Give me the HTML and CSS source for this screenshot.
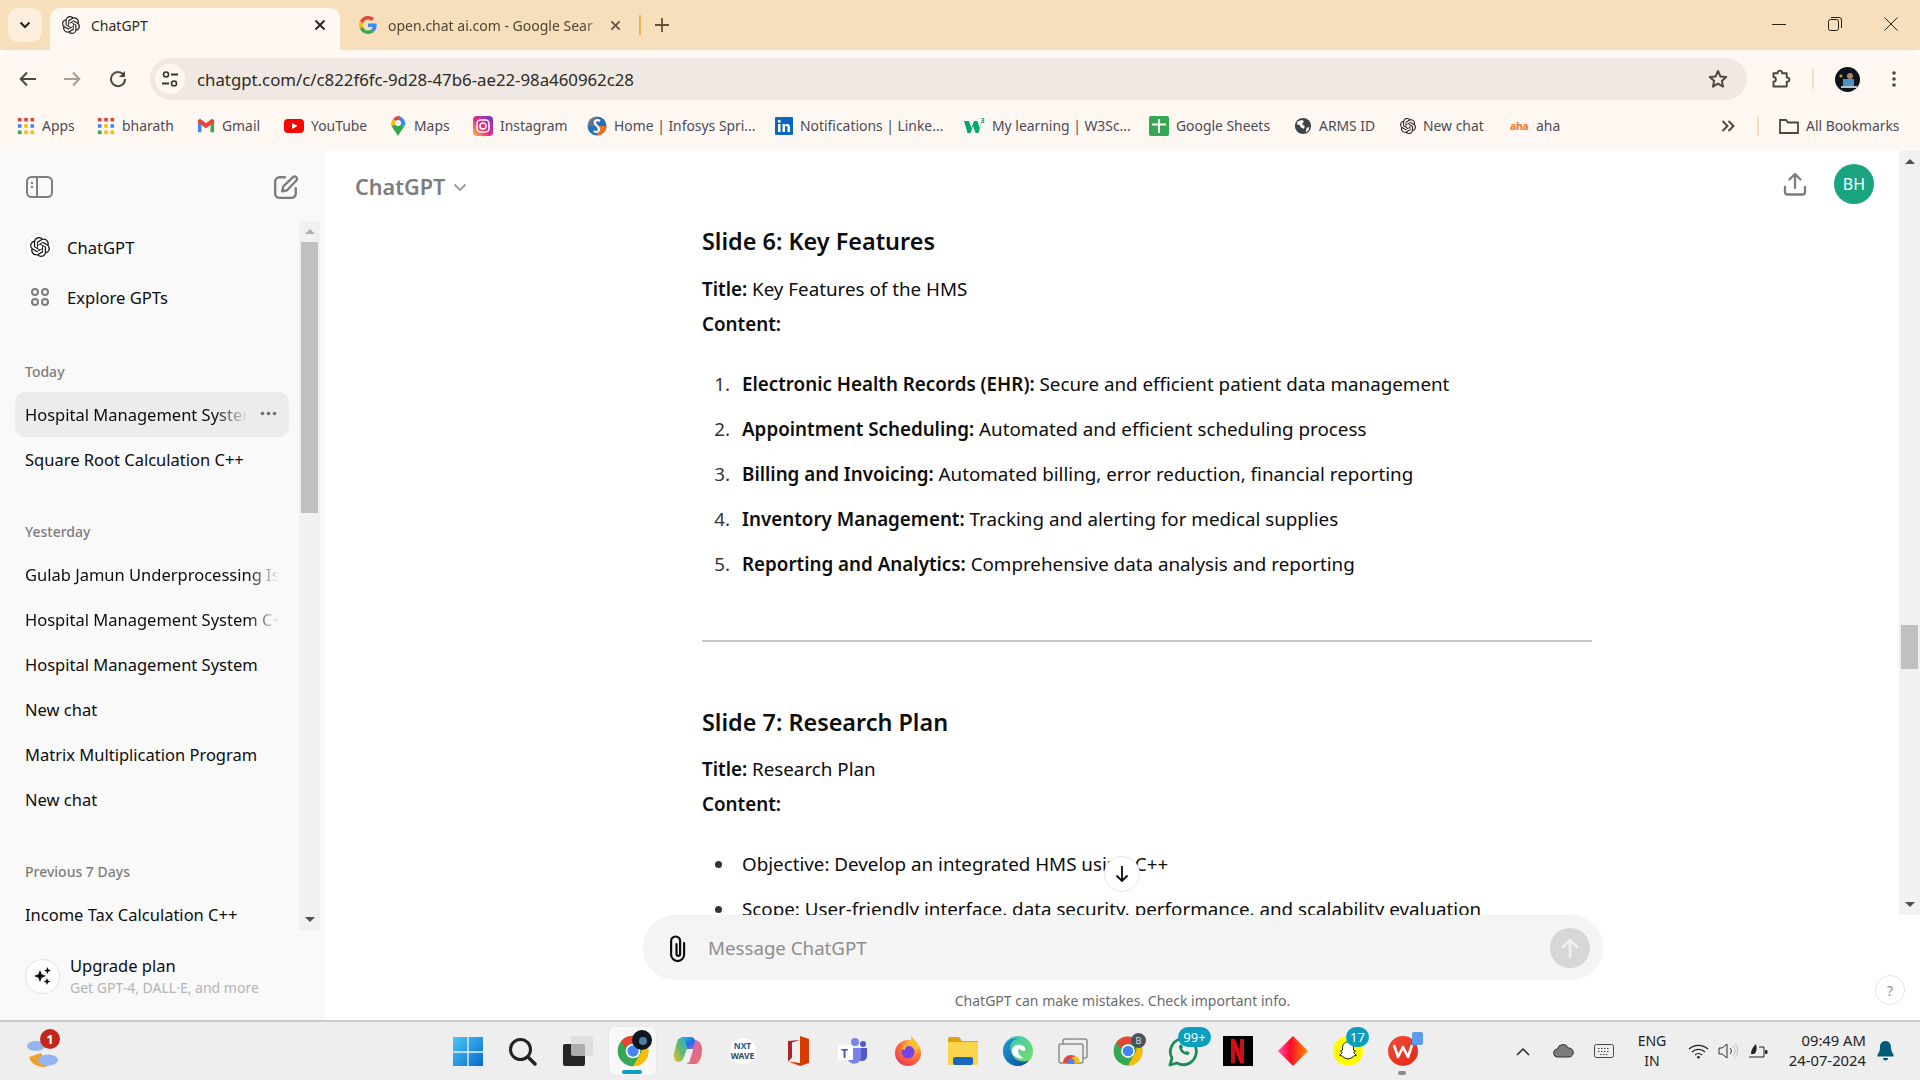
FILE: index.html
```html
<!DOCTYPE html>
<html lang="en">
<head>
<meta charset="utf-8">
<title>ChatGPT</title>
<link rel="stylesheet" href="styles.css">
</head>
<body>
<svg class="defs" width="0" height="0">
  <defs>
    <symbol id="oai" viewBox="0 0 24 24"><path fill="currentColor" d="M22.2819 9.8211a5.9847 5.9847 0 0 0-.5157-4.9108 6.0462 6.0462 0 0 0-6.5098-2.9A6.0651 6.0651 0 0 0 4.9807 4.1818a5.9847 5.9847 0 0 0-3.9977 2.9 6.0462 6.0462 0 0 0 .7427 7.0966 5.98 5.98 0 0 0 .511 4.9107 6.051 6.051 0 0 0 6.5146 2.9001A5.9847 5.9847 0 0 0 13.2599 24a6.0557 6.0557 0 0 0 5.7718-4.2058 5.9894 5.9894 0 0 0 3.9977-2.9001 6.0557 6.0557 0 0 0-.7475-7.0729zm-9.022 12.6081a4.4755 4.4755 0 0 1-2.8764-1.0408l.1419-.0804 4.7783-2.7582a.7948.7948 0 0 0 .3927-.6813v-6.7369l2.02 1.1686a.071.071 0 0 1 .038.052v5.5826a4.504 4.504 0 0 1-4.4945 4.4944zm-9.6607-4.1254a4.4708 4.4708 0 0 1-.5346-3.0137l.142.0852 4.783 2.7582a.7712.7712 0 0 0 .7806 0l5.8428-3.3685v2.3324a.0804.0804 0 0 1-.0332.0615L9.74 19.9502a4.4992 4.4992 0 0 1-6.1408-1.6464zM2.3408 7.8956a4.485 4.485 0 0 1 2.3655-1.9728V11.6a.7664.7664 0 0 0 .3879.6765l5.8144 3.3543-2.0201 1.1685a.0757.0757 0 0 1-.071 0l-4.8303-2.7865A4.504 4.504 0 0 1 2.3408 7.872zm16.5963 3.8558L13.1038 8.364 15.1192 7.2a.0757.0757 0 0 1 .071 0l4.8303 2.7913a4.4944 4.4944 0 0 1-.6765 8.1042v-5.6772a.79.79 0 0 0-.407-.667zm2.0107-3.0231l-.142-.0852-4.7735-2.7818a.7759.7759 0 0 0-.7854 0L9.409 9.2297V6.8974a.0662.0662 0 0 1 .0284-.0615l4.8303-2.7866a4.4992 4.4992 0 0 1 6.6802 4.66zM8.3065 12.863l-2.02-1.1638a.0804.0804 0 0 1-.038-.0567V6.0742a4.4992 4.4992 0 0 1 7.3757-3.4537l-.142.0805L8.704 5.459a.7948.7948 0 0 0-.3927.6813zm1.0976-2.3654l2.602-1.4998 2.6069 1.4998v2.9994l-2.5974 1.4997-2.6067-1.4997Z"/></symbol>
    <symbol id="grid9" viewBox="0 0 20 20"><g><rect x="1" y="1" width="4" height="4" fill="#ea4335"/><rect x="8" y="1" width="4" height="4" fill="#ea4335"/><rect x="15" y="1" width="4" height="4" fill="#ea4335"/><rect x="1" y="8" width="4" height="4" fill="#4285f4"/><rect x="8" y="8" width="4" height="4" fill="#fbbc05"/><rect x="15" y="8" width="4" height="4" fill="#4285f4"/><rect x="1" y="15" width="4" height="4" fill="#34a853"/><rect x="8" y="15" width="4" height="4" fill="#fbbc05"/><rect x="15" y="15" width="4" height="4" fill="#fbbc05"/></g></symbol>
    <symbol id="globe" viewBox="0 0 20 20"><circle cx="10" cy="10" r="9" fill="#3f4347"/><path fill="#fff8f2" d="M4 5l5-2 2 2-2 3 3 2-1 3-3-1-2-3-3-1zM14 12l3-1-1 4-3 2z"/></symbol>
    <symbol id="chrome" viewBox="0 0 48 48"><circle cx="24" cy="24" r="23" fill="#34a853"/><path fill="#ea4335" d="M24 1a23 23 0 0 1 20 11.5H24a11.5 11.5 0 0 0-10.6 7L5.5 10A23 23 0 0 1 24 1z"/><path fill="#fbbc05" d="M44 12.500a23 23 0 0 1-20 34.500l10-17.500a11.500 11.500 0 0 0 0-17z"/><circle cx="24" cy="24" r="11" fill="#fff"/><circle cx="24" cy="24" r="8.500" fill="#4285f4"/></symbol>
  </defs>
</svg>

<div class="browser">
  <header class="tabstrip">
    <div class="tabsearch"><svg width="12" height="8" viewBox="0 0 12 8"><path d="M1.500 1.500 6 6l4.500-4.500" fill="none" stroke="#222" stroke-width="2"/></svg></div>
    <div class="tab tab-active">
      <svg class="tab-fav" width="18" height="18"><use href="#oai"/></svg>
      <span class="tab-title">ChatGPT</span>
      <svg class="tab-x" width="12" height="12" viewBox="0 0 12 12"><path d="M1.500 1.500l9 9m0-9l-9 9" stroke="#222" stroke-width="1.800"/></svg>
    </div>
    <div class="tab tab-idle">
      <svg class="tab-fav" width="18" height="18" viewBox="0 0 48 48"><path fill="#ea4335" d="M24 9.500c3.500 0 6.700 1.200 9.200 3.600l6.900-6.900C35.900 2.400 30.500 0 24 0 14.600 0 6.500 5.400 2.600 13.200l8 6.200C12.400 13.700 17.700 9.500 24 9.500z"/><path fill="#4285f4" d="M47 24.500c0-1.600-.1-3.100-.4-4.500H24v9h12.900c-.6 3-2.200 5.500-4.700 7.200l7.700 6C44.400 37.900 47 31.800 47 24.500z"/><path fill="#fbbc05" d="M10.600 28.600A14.500 14.500 0 0 1 10.600 19.400l-8-6.200a24 24 0 0 0 0 21.600z"/><path fill="#34a853" d="M24 48c6.500 0 11.900-2.100 15.900-5.800l-7.700-6c-2.100 1.400-4.900 2.300-8.200 2.300-6.300 0-11.600-4.200-13.400-9.900l-8 6.200C6.500 42.600 14.600 48 24 48z"/></svg>
      <span class="tab-title tab-title-fade">open.chat ai.com - Google Sear</span>
      <svg class="tab-x" width="11" height="11" viewBox="0 0 12 12"><path d="M1.500 1.500l9 9m0-9l-9 9" stroke="#5d5040" stroke-width="1.800"/></svg>
    </div>
    <span class="tab-sep"></span>
    <svg class="tab-plus" width="14" height="14" viewBox="0 0 14 14"><path d="M7 0v14M0 7h14" stroke="#5d5040" stroke-width="1.800"/></svg>
    <div class="winctl">
      <svg width="14" height="14" viewBox="0 0 14 14"><path d="M0 7.500h14" stroke="#222"/></svg>
      <svg width="14" height="14" viewBox="0 0 14 14"><rect x=".5" y="2.500" width="10" height="11" rx="2" fill="none" stroke="#222"/><path d="M3 .5h8a2.500 2.500 0 0 1 2.500 2.500v8" fill="none" stroke="#222"/></svg>
      <svg width="14" height="14" viewBox="0 0 14 14"><path d="M.5.500l13 13m0-13l-13 13" stroke="#222"/></svg>
    </div>
  </header>

  <nav class="toolbar">
    <svg class="nav-ic" width="18" height="16" viewBox="0 0 18 16"><path d="M17 8H2m6-6.500L1.700 8 8 14.500" fill="none" stroke="#50463a" stroke-width="2"/></svg>
    <svg class="nav-ic" width="18" height="16" viewBox="0 0 18 16"><path d="M1 8h15m-6-6.500L16.300 8 10 14.500" fill="none" stroke="#a69c90" stroke-width="2"/></svg>
    <svg class="nav-ic" width="18" height="18" viewBox="0 0 18 18"><path d="M15 5.500A7 7 0 1 0 16 9" fill="none" stroke="#50463a" stroke-width="2"/><path d="M16 1v6h-6z" fill="#50463a"/></svg>
    <div class="omnibox">
      <span class="site-chip"><svg width="18" height="18" viewBox="0 0 18 18"><circle cx="5" cy="4.500" r="2.500" fill="none" stroke="#3a322a" stroke-width="1.600"/><path d="M10 4.500h7M1 13.500h7" stroke="#3a322a" stroke-width="1.800"/><circle cx="13" cy="13.500" r="2.500" fill="none" stroke="#3a322a" stroke-width="1.600"/></svg></span>
      <span class="url">chatgpt.com/c/c822f6fc-9d28-47b6-ae22-98a460962c28</span>
      <svg class="star" width="20" height="20" viewBox="0 0 20 20"><path d="M10 2l2.400 5.400 5.800.6-4.400 3.900 1.300 5.700L10 14.700l-5.100 2.900 1.300-5.700L1.800 8l5.800-.6z" fill="none" stroke="#50463a" stroke-width="2" stroke-linejoin="round"/></svg>
    </div>
    <svg class="ext" width="20" height="20" viewBox="0 0 20 20"><path d="M1 5h4.500a2.300 2.300 0 1 1 4.500 0H15v4.500a2.300 2.300 0 1 1 0 4.500v5H1v-5a2.500 2.500 0 0 0 0-5z" transform="translate(1.500 -.5) scale(.95)" fill="none" stroke="#50463a" stroke-width="2" stroke-linejoin="round"/></svg>
    <span class="tool-sep"></span>
    <svg class="avatar" width="25" height="25" viewBox="0 0 25 25"><defs><clipPath id="avc"><circle cx="12.500" cy="12.500" r="12.500"/></clipPath></defs><g clip-path="url(#avc)"><rect width="25" height="25" fill="#0f141c"/><rect x="8" y="12" width="11" height="8" fill="#4b93c4"/><circle cx="15" cy="9" r="3" fill="#a9856e"/><circle cx="6" cy="9" r="1.500" fill="#c79b3a"/><rect x="6" y="19" width="16" height="2" fill="#b9c2c8"/></g></svg>
    <svg class="kebab" width="4" height="16" viewBox="0 0 4 16"><circle cx="2" cy="2" r="1.800" fill="#50463a"/><circle cx="2" cy="8" r="1.800" fill="#50463a"/><circle cx="2" cy="14" r="1.800" fill="#50463a"/></svg>
  </nav>

  <nav class="bookmarks">
    <div class="bm"><svg width="18" height="18"><use href="#grid9"/></svg><span>Apps</span></div>
    <div class="bm"><svg width="18" height="18"><use href="#grid9"/></svg><span>bharath</span></div>
    <div class="bm"><svg width="18" height="18" viewBox="0 0 20 20"><path fill="#4285f4" d="M1 5v12h4V9z"/><path fill="#34a853" d="M15 9v8h4V5z"/><path fill="#ea4335" d="M1 3.500V6l9 6.500L19 6V3.500L16.500 2 10 7 3.500 2z"/></svg><span>Gmail</span></div>
    <div class="bm"><svg width="20" height="20" viewBox="0 0 20 20"><rect y="3" width="20" height="14" rx="4" fill="#f00"/><path d="M8 7l5.500 3L8 13z" fill="#fff"/></svg><span>YouTube</span></div>
    <div class="bm"><svg width="18" height="22" viewBox="0 0 18 22"><path fill="#34a853" d="M9 21C7 17 4 14 2.500 11l7-4 6 4C14 14 11 17 9 21z"/><path fill="#fbbc05" d="M2.500 11A7 7 0 0 1 4 4l5 5z"/><path fill="#4285f4" d="M9 1a8 8 0 0 1 7 10l-7-3z"/><path fill="#ea4335" d="M4 4a7.500 7.500 0 0 1 7-3L8 7z"/><circle cx="9" cy="8" r="3" fill="#fff"/></svg><span>Maps</span></div>
    <div class="bm"><svg width="20" height="20" viewBox="0 0 20 20"><defs><linearGradient id="ig" x1="0" y1="1" x2="1" y2="0"><stop offset="0" stop-color="#fdc03a"/><stop offset=".45" stop-color="#ee2a7b"/><stop offset="1" stop-color="#5b3fd6"/></linearGradient></defs><rect width="20" height="20" rx="4" fill="url(#ig)"/><rect x="4" y="4" width="12" height="12" rx="3.500" fill="none" stroke="#fff" stroke-width="1.500"/><circle cx="10" cy="10" r="3" fill="none" stroke="#fff" stroke-width="1.500"/></svg><span>Instagram</span></div>
    <div class="bm"><svg width="20" height="20" viewBox="0 0 20 20"><circle cx="10" cy="10" r="9.500" fill="#2572b8"/><path fill="#e8722a" d="M10 10h9.500a9.500 9.500 0 0 1-9.500 9.500z"/><path fill="#e8722a" d="M.5 10H10V.5A9.500 9.500 0 0 0 .5 10z" opacity=".35"/><path d="M13 5c-3-2-6 0-5 2.500S13 11 12 14s-4 2-5 1" fill="none" stroke="#fff" stroke-width="2.200"/></svg><span>Home | Infosys Spri...</span></div>
    <div class="bm"><svg width="18" height="18" viewBox="0 0 18 18"><rect width="18" height="18" rx="1" fill="#0a66c2"/><rect x="3" y="7" width="2.500" height="8" fill="#fff"/><circle cx="4.200" cy="4.300" r="1.500" fill="#fff"/><path d="M7.500 7H10v1.200c1-1.800 5-2 5 1.800v5h-2.500v-4.500c0-2-2.500-1.800-2.500 0V15H7.500z" fill="#fff"/></svg><span>Notifications | Linke...</span></div>
    <div class="bm"><svg width="21" height="18" viewBox="0 0 21 18"><path fill="#04aa6d" d="M0 4h5l2.500 7L10 4h3.500l2 7L18 4l-3.500 12h-3L9 9l-2.500 7h-3z"/><text x="16.500" y="6" class="w3-sup">3</text></svg><span>My learning | W3Sc...</span></div>
    <div class="bm"><svg width="20" height="20" viewBox="0 0 20 20"><rect width="20" height="20" rx="2" fill="#34a853"/><path d="M10 3v14M3 8.500h14" stroke="#fff" stroke-width="2"/></svg><span>Google Sheets</span></div>
    <div class="bm"><svg width="18" height="18"><use href="#globe"/></svg><span>ARMS ID</span></div>
    <div class="bm"><svg width="16" height="16"><use href="#oai"/></svg><span>New chat</span></div>
    <div class="bm"><span class="aha">aha</span><span>aha</span></div>
    <svg class="bm-more" width="14" height="12" viewBox="0 0 14 12"><path d="M1.500 1l5 5-5 5M7.500 1l5 5-5 5" fill="none" stroke="#50463a" stroke-width="2"/></svg>
    <span class="bm-sep"></span>
    <div class="bm"><svg width="20" height="16" viewBox="0 0 20 16"><path d="M1 14V2h6l2 2.500h10V15H1z" fill="none" stroke="#50463a" stroke-width="1.800"/></svg><span>All Bookmarks</span></div>
  </nav>

  <div class="page">
    <aside class="sidebar">
      <div class="side-top">
        <svg width="28" height="24" viewBox="0 0 28 24"><rect x="1" y="2" width="25" height="20" rx="4.500" fill="none" stroke="#7d7d7d" stroke-width="2"/><path d="M11 2v20" stroke="#7d7d7d" stroke-width="2"/><circle cx="6" cy="8" r="1.200" fill="#7d7d7d"/><circle cx="6" cy="12" r="1.200" fill="#7d7d7d"/></svg>
        <svg width="26" height="26" viewBox="0 0 24 24"><path d="M11 3H6a4 4 0 0 0-4 4v11a4 4 0 0 0 4 4h11a4 4 0 0 0 4-4v-5" fill="none" stroke="#7d7d7d" stroke-width="2.200" stroke-linecap="round"/><path d="M19 2.500a2.300 2.300 0 0 1 3 3L13 15l-4.500 1 1-4.500z" fill="none" stroke="#7d7d7d" stroke-width="2.200" stroke-linejoin="round"/></svg>
      </div>
      <div class="side-scroll">
        <div class="side-list">
          <div class="side-link"><span class="gpt-badge"><svg width="20" height="20"><use href="#oai"/></svg></span><span>ChatGPT</span></div>
          <div class="side-link"><span class="gpt-plain"><svg width="20" height="20" viewBox="0 0 20 20"><g fill="none" stroke="#7d7d7d" stroke-width="2"><circle cx="5" cy="5" r="3"/><circle cx="15" cy="5" r="3"/><circle cx="5" cy="15" r="3"/><circle cx="15" cy="15" r="3"/></g></svg></span><span>Explore GPTs</span></div>
          <h4 class="group-label group-today">Today</h4>
          <div class="chat chat-active"><span class="chat-text chat-fade">Hospital Management System</span><svg class="dots" width="17" height="5" viewBox="0 0 17 5"><circle cx="2.500" cy="2.500" r="1.800" fill="#6f6f6f"/><circle cx="8.500" cy="2.500" r="1.800" fill="#6f6f6f"/><circle cx="14.500" cy="2.500" r="1.800" fill="#6f6f6f"/></svg></div>
          <div class="chat"><span class="chat-text">Square Root Calculation C++</span></div>
          <h4 class="group-label group-next">Yesterday</h4>
          <div class="chat"><span class="chat-text chat-fade-full">Gulab Jamun Underprocessing Issue</span></div>
          <div class="chat"><span class="chat-text chat-fade-full">Hospital Management System C++</span></div>
          <div class="chat"><span class="chat-text">Hospital Management System</span></div>
          <div class="chat"><span class="chat-text">New chat</span></div>
          <div class="chat"><span class="chat-text">Matrix Multiplication Program</span></div>
          <div class="chat"><span class="chat-text">New chat</span></div>
          <h4 class="group-label group-prev">Previous 7 Days</h4>
          <div class="chat"><span class="chat-text">Income Tax Calculation C++</span></div>
        </div>
        <div class="scrollbar side-bar">
          <i class="arrow-up"></i>
          <div class="side-track"><b class="thumb side-thumb"></b></div>
          <i class="arrow-down"></i>
        </div>
      </div>
      <div class="upgrade">
        <span class="upgrade-ic"><svg width="20" height="20" viewBox="0 0 20 20"><path fill="#0d0d0d" d="M7 4l1.700 4.300L13 10l-4.300 1.700L7 16l-1.700-4.300L1 10l4.300-1.700zM14.500 1l1 2.500 2.500 1-2.500 1-1 2.500-1-2.500-2.500-1 2.500-1zM14 12l1 2.500 2.500 1-2.500 1-1 2.500-1-2.500-2.500-1 2.500-1z"/></svg></span>
        <div class="upgrade-txt"><div class="upgrade-t">Upgrade plan</div><div class="upgrade-s">Get GPT-4, DALL·E, and more</div></div>
      </div>
    </aside>

    <main class="main">
      <div class="upper">
        <div class="chatcol">
          <div class="chat-head">
            <div class="model">ChatGPT <svg width="14" height="9" viewBox="0 0 14 9"><path d="M1.500 1.500 7 7l5.500-5.500" fill="none" stroke="#9b9b9b" stroke-width="1.800"/></svg></div>
            <div class="head-right">
              <svg width="24" height="24" viewBox="0 0 24 24"><path d="M12 16V2.500M6.500 7.500 12 2l5.500 5.500M2 15v5a2.500 2.500 0 0 0 2.500 2.500h15A2.500 2.500 0 0 0 22 20v-5" fill="none" stroke="#7d7d7d" stroke-width="2.300" stroke-linecap="round" stroke-linejoin="round"/></svg>
              <span class="user-badge">BH</span>
            </div>
          </div>
          <article class="thread">
            <h3>Slide 6: Key Features</h3>
            <p><strong>Title:</strong> Key Features of the HMS<br><strong>Content:</strong></p>
            <ol>
              <li><strong>Electronic Health Records (EHR):</strong> Secure and efficient patient data management</li>
              <li><strong>Appointment Scheduling:</strong> Automated and efficient scheduling process</li>
              <li><strong>Billing and Invoicing:</strong> Automated billing, error reduction, financial reporting</li>
              <li><strong>Inventory Management:</strong> Tracking and alerting for medical supplies</li>
              <li><strong>Reporting and Analytics:</strong> Comprehensive data analysis and reporting</li>
            </ol>
            <hr>
            <h3>Slide 7: Research Plan</h3>
            <p><strong>Title:</strong> Research Plan<br><strong>Content:</strong></p>
            <ul>
              <li>Objective: Develop an integrated HMS using C++</li>
              <li>Scope: User-friendly interface, data security, performance, and scalability evaluation</li>
            </ul>
          </article>
          <span class="to-bottom"><svg width="14" height="18" viewBox="0 0 14 18"><path d="M7 1v15M1.500 10.500 7 16l5.500-5.500" fill="none" stroke="#0d0d0d" stroke-width="1.800"/></svg></span>
        </div>
        <div class="scrollbar main-bar">
          <i class="arrow-up"></i>
          <div class="main-track"><b class="thumb main-thumb"></b></div>
          <i class="arrow-down"></i>
        </div>
      </div>
      <div class="composer-wrap">
        <div class="composer">
          <svg width="20" height="28" viewBox="0 0 20 28"><path d="M8.500 10v10a1.800 1.800 0 0 0 3.600 0V7a4.500 4.500 0 0 0-9 0v13.500a6.500 6.500 0 0 0 13 0V9" fill="none" stroke="#0d0d0d" stroke-width="2.200" stroke-linecap="round"/></svg>
          <span class="placeholder">Message ChatGPT</span>
          <span class="send"><svg width="20" height="22" viewBox="0 0 20 22"><path d="M10 20V3M3 10l7-7 7 7" fill="none" stroke="#f1f1f1" stroke-width="2.500" stroke-linecap="round"/></svg></span>
        </div>
        <div class="disclaimer">ChatGPT can make mistakes. Check important info.</div>
        <span class="help">?</span>
      </div>
    </main>
  </div>

  <footer class="taskbar">
    <div class="weather">
      <svg width="34" height="36" viewBox="0 0 34 36"><path d="M3 24a14 14 0 0 0 24 5A14 14 0 0 1 15 20z" fill="#f0a02c"/><ellipse cx="10" cy="13" rx="9" ry="5" fill="#93b4ee"/><ellipse cx="22" cy="27" rx="10" ry="5.500" fill="#93b4ee"/></svg>
      <span class="badge-red">1</span>
    </div>
    <div class="apps">
      <div class="app"><svg width="30" height="30" viewBox="0 0 30 30"><defs><linearGradient id="win" x1="0" y1="0" x2="1" y2="1"><stop offset="0" stop-color="#4cc8fa"/><stop offset="1" stop-color="#0568c8"/></linearGradient></defs><path fill="url(#win)" d="M0 1h14.300v14.300H0zM15.700 1H30v14.300H15.700zM0 16.700h14.300V31H0zM15.700 16.700H30V31H15.700z"/></svg></div>
      <div class="app"><svg width="29" height="29" viewBox="0 0 29 29"><circle cx="12.500" cy="12.500" r="10" fill="none" stroke="#222" stroke-width="3"/><path d="M20 20l7 7" stroke="#222" stroke-width="3.500" stroke-linecap="round"/></svg></div>
      <div class="app"><svg width="30" height="30" viewBox="0 0 30 30"><rect x="0" y="8" width="22" height="22" rx="2" fill="#262626"/><rect x="8" y="0" width="22" height="20" rx="2" fill="#d9d9d9" opacity=".75"/></svg></div>
      <div class="app app-active"><svg width="32" height="32"><use href="#chrome"/></svg><svg class="corner-av" width="20" height="20" viewBox="0 0 20 20"><circle cx="10" cy="10" r="10" fill="#10161f"/><circle cx="11" cy="11" r="4" fill="#4b7ea2"/></svg><i class="app-line"></i></div>
      <div class="app"><svg width="30" height="30" viewBox="0 0 30 30"><defs><linearGradient id="cp1" x1="0" y1="0" x2="1" y2="1"><stop offset="0" stop-color="#2cc0e8"/><stop offset=".5" stop-color="#1f6fe0"/><stop offset="1" stop-color="#b66be8"/></linearGradient><linearGradient id="cp2" x1="0" y1="1" x2="1" y2="0"><stop offset="0" stop-color="#f1c232"/><stop offset=".5" stop-color="#62b86a"/><stop offset="1" stop-color="#29b0e0"/></linearGradient><linearGradient id="cp3" x1="0" y1="0" x2="1" y2="1"><stop offset="0" stop-color="#d06ce4"/><stop offset="1" stop-color="#ef6b4d"/></linearGradient></defs><path fill="url(#cp1)" d="M8 1h10c2 0 3 1 4 3l3 9H14l-2-7c-.5-2-2-3-4-3z"/><path fill="url(#cp2)" d="M8 2c3 0 3.500 2 4 4l2 7-4 10c-1 2-2 3-5 3-3 0-5-4-4-9l3-11c.5-2 2-4 4-4z"/><path fill="url(#cp3)" d="M22 4c2 0 7 2 7 9s-2 13-6 15H12c3 0 4.500-2 5-4l3-10c1-3 2-8 2-10z"/></svg></div>
      <div class="app"><span class="nxt"><span class="nxt-a">NXT</span><span class="nxt-b">WAVE</span></span></div>
      <div class="app"><svg width="22" height="30" viewBox="0 0 22 30"><path fill="#d83b01" d="M13 0l9 3v24l-9 3-12-4.500 12 1.500V4z"/><path fill="#a4262c" d="M13 4L5 6.500v15l-4 4V5z"/></svg></div>
      <div class="app"><svg width="30" height="28" viewBox="0 0 30 28"><circle cx="17" cy="5" r="4" fill="#7b83eb"/><circle cx="25" cy="7" r="3" fill="#5059c9"/><path fill="#5059c9" d="M20 11h9v8a5 5 0 0 1-9 3z"/><path fill="#7b83eb" d="M10 11h13v10a7 7 0 0 1-13 2z"/><rect x="0" y="8" width="15" height="15" rx="1" fill="#fff"/><text x="3" y="20.500" class="teams-t">T</text></svg></div>
      <div class="app"><svg width="30" height="30" viewBox="0 0 30 30"><defs><radialGradient id="ff" cx=".7" cy=".2" r="1"><stop offset="0" stop-color="#ffd13a"/><stop offset=".5" stop-color="#ff7139"/><stop offset="1" stop-color="#e5245e"/></radialGradient></defs><circle cx="15" cy="17" r="13" fill="url(#ff)"/><path d="M18 0c4 4 8 8 8 13l-8-3z" fill="#ffc02e"/><circle cx="15" cy="16" r="6.500" fill="#7542e5"/><path d="M8 13c2-4 7-5 10-3-4-.5-6 1-6 4z" fill="#ffb13a"/></svg></div>
      <div class="app"><svg width="30" height="28" viewBox="0 0 30 28"><path fill="#e0a108" d="M0 2a2 2 0 0 1 2-2h9l3 4h16v6H0z"/><rect y="5" width="30" height="23" rx="1" fill="#fcd54f"/><rect x="5" y="20" width="20" height="8" rx="2" fill="#1668c0"/></svg></div>
      <div class="app"><svg width="30" height="30" viewBox="0 0 30 30"><defs><linearGradient id="edge" x1="0" y1="0" x2="1" y2="1"><stop offset="0" stop-color="#36c5c0"/><stop offset="1" stop-color="#7ddf5f"/></linearGradient><linearGradient id="edge2" x1="0" y1="0" x2="1" y2="1"><stop offset="0" stop-color="#1d9bd8"/><stop offset="1" stop-color="#0c4f95"/></linearGradient></defs><circle cx="15" cy="15" r="15" fill="url(#edge)"/><path fill="url(#edge2)" d="M0 15C0 6 8 1 15 3c-7 1-9 6-7 13 2 8 11 12 18 8-3 4-7 6-11 6C6 30 0 23 0 15z"/><path fill="#fff" d="M9 15c0-5 5-7 9-6s5 4 4 6c-3 0-6-1-6-3-1 1-2 6 3 9s-10 2-10-6z"/></svg></div>
      <div class="app"><svg width="30" height="26" viewBox="0 0 30 26"><rect x="5" y="1" width="24" height="19" rx="2" fill="#eee" stroke="#8d8d8d" stroke-width="1.500"/><rect x="1" y="6" width="24" height="19" rx="2" fill="#eee" stroke="#8d8d8d" stroke-width="1.500"/><path d="M5 25a8 8 0 0 1 16 0z" fill="#ea4335"/><path d="M13 25v-4a4 4 0 0 1 8 4z" fill="#fbbc05"/><circle cx="13" cy="24" r="3.500" fill="#4285f4"/></svg></div>
      <div class="app"><svg width="30" height="30"><use href="#chrome"/></svg><span class="corner-b">B</span></div>
      <div class="app"><svg width="32" height="32" viewBox="0 0 32 32"><path d="M3 30l2-7a13 13 0 1 1 5 5z" fill="none" stroke="#1b8b5a" stroke-width="2.800" stroke-linejoin="round"/><path d="M12 11c0 5 4 9 9 9l2-2-3-2-2 1-3-3 1-2-2-3z" fill="#1b8b5a"/></svg><span class="count count-wide">99+</span></div>
      <div class="app"><span class="netflix"><svg width="13" height="24" viewBox="0 0 13 24"><path fill="#c11119" d="M0 0h4v24l-4 .5zM9 0h4v24l-4-.5z"/><path fill="#e50914" d="M0 0h4l9 24H9z"/></svg></span></div>
      <div class="app"><svg width="30" height="30" viewBox="0 0 30 30"><defs><linearGradient id="dia" x1="0" y1="0" x2="1" y2="0"><stop offset="0" stop-color="#ff4fb8"/><stop offset=".4" stop-color="#ff0a2a"/><stop offset="1" stop-color="#ff9000"/></linearGradient></defs><path fill="url(#dia)" d="M15 0l15 15-15 15L0 15z"/></svg></div>
      <div class="app"><svg width="30" height="30" viewBox="0 0 30 30"><circle cx="15" cy="15" r="15" fill="#fffc00"/><path d="M15 6c4 0 5.500 3 5.500 6v2l2 1-2 1.500 3 3-3 .5-1 1.500-4.500 1.500-4.500-1.500-1-1.500-3-.5 3-3L7.500 15l2-1v-2c0-3 1.500-6 5.500-6z" fill="#fff" stroke="#222" stroke-width="1"/></svg><span class="count">17</span></div>
      <div class="app"><svg width="30" height="30" viewBox="0 0 30 30"><defs><linearGradient id="wps" x1="0" y1="0" x2="1" y2="1"><stop offset="0" stop-color="#f24a3d"/><stop offset="1" stop-color="#e02a12"/></linearGradient></defs><circle cx="15" cy="15" r="15" fill="url(#wps)"/><path d="M6 9l4 12 5-10 5 10 4-12" fill="none" stroke="#fff" stroke-width="2.600" stroke-linejoin="round"/></svg><span class="wps-doc"></span><i class="app-dot"></i></div>
    </div>
    <div class="tray">
      <svg class="tr-chev" width="14" height="9" viewBox="0 0 14 9"><path d="M1 8l6-6 6 6" fill="none" stroke="#222" stroke-width="1.500"/></svg>
      <svg class="tr-cloud" width="21" height="14" viewBox="0 0 21 14"><path d="M5 13a4 4 0 0 1-.5-8 5.500 5.500 0 0 1 10.500-1 4.500 4.500 0 0 1 1.500 9z" fill="#7c7c7c" stroke="#333"/></svg>
      <svg class="tr-kbd" width="20" height="14" viewBox="0 0 20 14"><rect x=".5" y=".5" width="19" height="13" rx="2" fill="none" stroke="#444"/><path d="M4 4.500h12M4 7.500h12M6 10.500h8" stroke="#444" stroke-dasharray="1.500 1.500"/></svg>
      <div class="tr-lang">ENG<br>IN</div>
      <svg class="tr-wifi" width="21" height="15" viewBox="0 0 21 15"><path d="M1 5a14 14 0 0 1 19 0M4 8a9.500 9.500 0 0 1 13 0M7 11a5 5 0 0 1 7 0" fill="none" stroke="#222" stroke-width="1.300"/><circle cx="10.500" cy="13.300" r="1.300" fill="#222"/></svg>
      <svg class="tr-vol" width="20" height="16" viewBox="0 0 20 16"><path d="M1 5h3l5-4v14l-5-4H1z" fill="none" stroke="#333"/><path d="M12 5a4 4 0 0 1 0 6" fill="none" stroke="#333"/><path d="M15 3a7 7 0 0 1 0 10M17.500 1.500a10 10 0 0 1 0 13" fill="none" stroke="#bbb"/></svg>
      <svg class="tr-bat" width="21" height="16" viewBox="0 0 21 16"><path d="M1 14h15V4h-5" fill="none" stroke="#222"/><rect x="17" y="7" width="2.500" height="4" rx="1" fill="#222"/><path d="M3 11c0-5 3-8 5-10 1 4 1 8-2 10z" fill="#222"/></svg>
      <div class="tr-clock">09:49 AM<br>24-07-2024</div>
      <svg class="tr-bell" width="17" height="20" viewBox="0 0 17 20"><path d="M8.500 0c4 0 5.500 3 5.500 6.500 0 3 1 5 2.500 7v2H.5v-2C2 11.500 3 9.500 3 6.500 3 3 4.500 0 8.500 0z" fill="#005a7a"/><path d="M6 17h5a2.500 2.500 0 0 1-5 0z" fill="#005a7a"/></svg>
    </div>
  </footer>
</div>
</body>
</html>
```

FILE: styles.css
```css
* { box-sizing: border-box; }
html, body { margin: 0; padding: 0; height: 100%; overflow: hidden; }
body { font-family: "Noto Sans", "Open Sans", "Liberation Sans", sans-serif; color: #0d0d0d; background: #fff; }
.defs { position: absolute; }
.browser { width: 1920px; height: 1080px; display: flex; flex-direction: column; }

/* tab strip */
.tabstrip { height: 50px; flex: none; background: #f6dfba; display: flex; align-items: flex-end; padding-left: 8px; position: relative; }
.tabsearch { width: 34px; height: 34px; margin-bottom: 8px; border-radius: 10px; background: #fbeedb; display: flex; align-items: center; justify-content: center; flex: none; }
.tab { height: 42px; display: flex; align-items: center; flex: none; }
.tab-active { width: 290px; margin-left: 8px; padding: 0 14px 8px 12px; background: #fff8f2; border-radius: 10px 10px 0 0; }
.tab-idle { width: 299px; padding: 0 18px 8px 19px; }
.tab-fav { flex: none; color: #222; }
.tab-title { font-size: 14px; margin-left: 11px; flex: 1; white-space: nowrap; overflow: hidden; color: #2e2a25; }
.tab-idle .tab-title { color: #4f4537; margin-left: 11px; }
.tab-title-fade { -webkit-mask-image: linear-gradient(90deg, #000 88%, transparent); mask-image: linear-gradient(90deg, #000 88%, transparent); }
.tab-x { flex: none; }
.tab-sep { width: 2px; height: 20px; background: #eab366; margin: 0 0 15px 0; flex: none; }
.tab-plus { margin: 0 0 18px 14px; flex: none; }
.winctl { margin-left: auto; align-self: stretch; display: flex; align-items: center; gap: 42px; padding: 0 22px 2px 0; }

/* toolbar */
.toolbar { height: 54px; flex: none; background: #fff8f2; border-radius: 8px 8px 0 0; margin-top: 0; display: flex; align-items: center; padding: 4px 0 0 19px; }
.nav-ic { flex: none; margin-right: 26px; }
.nav-ic:nth-child(3) { margin-left: 2px; margin-right: 24px; }
.omnibox { width: 1597px; height: 42px; margin-left: -1px; border-radius: 21px; background: #f0e9e3; display: flex; align-items: center; padding: 0 19px 0 5px; flex: none; }
.site-chip { width: 30px; height: 30px; border-radius: 50%; background: #fff8f2; display: flex; align-items: center; justify-content: center; flex: none; }
.url { margin-left: 12px; font-size: 16.800px; color: #2f2a24; flex: 1; white-space: nowrap; }
.star { flex: none; }
.ext { margin-left: 24px; flex: none; }
.tool-sep { width: 2px; height: 20px; background: #f6dfba; margin-left: 21px; flex: none; }
.avatar { margin-left: 21px; flex: none; }
.kebab { margin-left: 32px; flex: none; }

/* bookmarks */
.bookmarks { height: 47px; flex: none; background: #fff8f2; display: grid; align-items: center; padding: 0 0 4px 17px; grid-template-columns: 80px 100px 87px 105px 84px 114px 188px 189px 185px 145px 106px 110px 211px 36px 22px auto; }
.bm { display: flex; align-items: center; gap: 7px; font-size: 13.900px; color: #4d4a52; white-space: nowrap; }
.bm svg { flex: none; color: #222; }
.bm-more { justify-self: start; }
.bm-sep { width: 2px; height: 20px; background: #f6dfba; }
.aha { width: 19px; color: #f27f37; font-weight: 800; font-size: 10.500px; letter-spacing: -.5px; }
.w3-sup { font: 700 7px "Noto Sans", sans-serif; fill: #04aa6d; }

/* page */
.page { flex: 1; min-height: 0; display: flex; }
.sidebar { width: 325px; flex: none; background: #f9f9f9; display: flex; flex-direction: column; }
.side-top { height: 70px; flex: none; display: flex; align-items: center; justify-content: space-between; padding: 2px 26px 0 26px; }
.side-scroll { height: 709px; flex: none; display: flex; }
.side-list { width: 299px; flex: none; overflow: hidden; padding: 0 0 0 15px; }
.side-link { height: 50px; display: flex; align-items: center; font-size: 16.600px; color: #0d0d0d; margin-left: 10px; white-space: nowrap; }
.side-list > .side-link:first-child { margin-top: 1px; }
.gpt-badge { width: 29px; height: 29px; border-radius: 50%; background: #fff; border: 1px solid #e8e8e8; display: flex; align-items: center; justify-content: center; margin-right: 14px; color: #1a1a1a; flex: none; }
.gpt-plain { width: 29px; display: flex; justify-content: center; margin-right: 14px; flex: none; }
.side-link span:last-child { margin-left: -1px; }
.group-label { margin: 0; font-size: 14px; font-weight: 500; color: #7d7d7d; padding-left: 10px; }
.group-today { margin-top: 40px; height: 30px; line-height: 20px; }
.group-next { margin-top: 39px; height: 31px; line-height: 22px; }
.group-prev { margin-top: 39px; height: 31px; line-height: 22px; }
.chat { height: 45px; width: 274px; border-radius: 10px; display: flex; align-items: center; padding: 0 10px; font-size: 16.500px; color: #0d0d0d; position: relative; }
.chat-active { background: #ececec; }
.chat-text { white-space: nowrap; overflow: hidden; flex: 1; }
.chat-fade { -webkit-mask-image: linear-gradient(90deg, #000 85%, transparent); mask-image: linear-gradient(90deg, #000 85%, transparent); margin-right: 12px; }
.chat-fade-full { -webkit-mask-image: linear-gradient(90deg, #000 88%, transparent); mask-image: linear-gradient(90deg, #000 88%, transparent); }
.dots { flex: none; margin: 0 2px 2px 0; }

.scrollbar { width: 21px; flex: none; background: #f1f1f1; display: flex; flex-direction: column; align-items: center; padding: 0 2px; }
.arrow-up, .arrow-down { display: block; width: 0; height: 0; border-left: 5px solid transparent; border-right: 5px solid transparent; flex: none; }
.arrow-up { border-bottom: 5px solid #b0b0b0; margin: 8px 0; }
.arrow-down { border-top: 5px solid #505050; margin: 8px 0; }
.thumb { display: block; width: 17px; background: #c0c0c0; }
.side-track { flex: 1; width: 17px; }
.side-thumb { height: 271px; }
.main-bar .arrow-up { border-bottom-color: #505050; }
.main-track { flex: 1; width: 17px; padding-top: 453px; }
.main-thumb { height: 44px; }

.upgrade { flex: 1; display: flex; align-items: center; padding: 4px 0 0 25px; }
.upgrade-ic { width: 35px; height: 35px; border-radius: 50%; border: 1px solid #e3e3e3; background: #fff; display: flex; align-items: center; justify-content: center; flex: none; margin-top: -2px; }
.upgrade-txt { margin-left: 10px; white-space: nowrap; }
.upgrade-t { font-size: 16.500px; line-height: 22px; color: #0d0d0d; }
.upgrade-s { font-size: 14px; line-height: 22px; color: #b4b4b4; }

/* main */
.main { flex: 1; min-width: 0; display: flex; flex-direction: column; }
.upper { height: 764px; flex: none; display: flex; }
.chatcol { flex: 1; min-width: 0; overflow: hidden; position: relative; }
.chat-head { height: 68px; display: flex; align-items: center; justify-content: space-between; padding: 0 25px 0 30px; }
.model { font-size: 21.600px; font-weight: 600; color: #7d7d7d; display: flex; align-items: center; gap: 8px; margin-top: 2px; }
.model svg { margin-top: 3px; }
.head-right { display: flex; align-items: center; gap: 27px; margin-bottom: 2px; }
.user-badge { width: 40px; height: 40px; border-radius: 50%; background: #19a37f; color: #fff; font-size: 16px; display: flex; align-items: center; justify-content: center; }
.thread { width: 890px; margin-left: 377px; font-size: 18.800px; line-height: 35px; color: #0d0d0d; }
.thread h3 { margin: 4px 0 0; font-size: 23.400px; line-height: 36px; font-weight: 600; }
.thread p { margin: 13px 0 0; }
.thread hr ~ p { margin-top: 12px; }
.thread strong { font-weight: 600; }
.thread ol { margin: 20px 0 0; padding: 0 0 0 33px; }
.thread ul { margin: 20px 0 0; padding: 0 0 0 33px; }
.thread li { height: 45px; line-height: 45px; padding-left: 7px; white-space: nowrap; }
.thread li::marker { color: #333; }
.thread hr { border: 0; height: 2px; background: #c8c8c8; margin: 53px 0 0; }
.thread hr + h3 { margin-top: 62px; }
.to-bottom { position: absolute; left: 779px; top: 705px; width: 36px; height: 36px; border-radius: 50%; background: #fff; border: 1px solid #e5e5e5; display: flex; align-items: center; justify-content: center; }

.composer-wrap { flex: 1; position: relative; }
.composer { width: 960px; height: 65px; margin-left: 318px; border-radius: 32px; background: #f4f4f4; display: flex; align-items: center; padding: 0 13px 0 25px; }
.placeholder { margin-left: 20px; font-size: 18.700px; color: #8e8e8e; flex: 1; }
.send { width: 40px; height: 40px; border-radius: 50%; background: #d7d7d7; display: flex; align-items: center; justify-content: center; }
.disclaimer { text-align: center; font-size: 14px; line-height: 20px; margin-top: 11px; color: #6b6b6b; width: 1595px; }
.help { position: absolute; left: 1550px; top: 60px; width: 30px; height: 30px; border-radius: 50%; border: 1px solid #e3e3e3; background: #fff; display: flex; align-items: center; justify-content: center; color: #8e8e8e; font-size: 14px; }

/* taskbar */
.taskbar { height: 60px; flex: none; background: #eeeeee; border-top: 2px solid #c9c9c9; display: flex; align-items: center; }
.weather { width: 440px; flex: none; padding-left: 26px; position: relative; display: flex; }
.badge-red { position: absolute; left: 40px; top: -4px; width: 20px; height: 20px; border-radius: 50%; background: #c4261d; color: #fff; font-size: 13px; font-weight: 700; display: flex; align-items: center; justify-content: center; }
.apps { display: flex; flex: none; }
.app { width: 55px; height: 48px; display: flex; align-items: center; justify-content: center; position: relative; flex: none; }
.app-active { width: 47px; margin: 0 4px; background: #f8f8f8; border-radius: 5px; box-shadow: 0 0 1px rgba(0,0,0,.2); }
.app-line { position: absolute; left: 13px; bottom: 1px; width: 20px; height: 4px; border-radius: 2px; background: #0a9ebf; }
.app-dot { position: absolute; left: 23px; bottom: 0; width: 8px; height: 4px; border-radius: 2px; background: #8a8a8a; }
.corner-av { position: absolute; right: 4px; top: 3px; }
.corner-b { position: absolute; right: 9px; top: 6px; width: 15px; height: 15px; border-radius: 50%; background: #4a5560; color: #ddd; font-size: 9px; display: flex; align-items: center; justify-content: center; }
.nxt { width: 26px; height: 26px; border-radius: 50%; background: #fff; display: flex; flex-direction: column; align-items: center; justify-content: center; font-size: 8.500px; line-height: 10px; font-weight: 700; color: #1b5b96; white-space: nowrap; }
.nxt-b { color: #2c4a63; }
.teams-t { font: 700 12px "Noto Sans", sans-serif; fill: #4b53bc; }
.count { position: absolute; left: 26px; top: 0; min-width: 22px; height: 20px; padding: 0 4px; border-radius: 10px; background: #0a9ebf; color: #fff; font-size: 13px; display: flex; align-items: center; justify-content: center; }
.count-wide { left: 23px; min-width: 33px; }
.netflix { width: 30px; height: 30px; background: #000; display: flex; align-items: center; justify-content: center; }
.wps-doc { position: absolute; right: 7px; top: 5px; width: 11px; height: 13px; border-radius: 2px; background: #5b9bf0; }

.tray { flex: 1; display: flex; align-items: center; position: relative; height: 100%; padding-left: 86px; }
.tr-chev { flex: none; }
.tr-cloud { margin-left: 23px; flex: none; }
.tr-kbd { margin-left: 20px; flex: none; }
.tr-lang { width: 46px; margin-left: 15px; text-align: center; font-size: 14px; line-height: 20px; color: #222; flex: none; }
.tr-wifi { margin-left: 13px; flex: none; }
.tr-vol { margin-left: 9px; flex: none; }
.tr-bat { margin-left: 10px; flex: none; }
.tr-clock { width: 92px; margin-left: 5px; text-align: right; font-size: 14.800px; line-height: 20px; color: #222; flex: none; white-space: nowrap; margin-top: -2px; }
.tr-bell { margin-left: 11px; flex: none; }
```
